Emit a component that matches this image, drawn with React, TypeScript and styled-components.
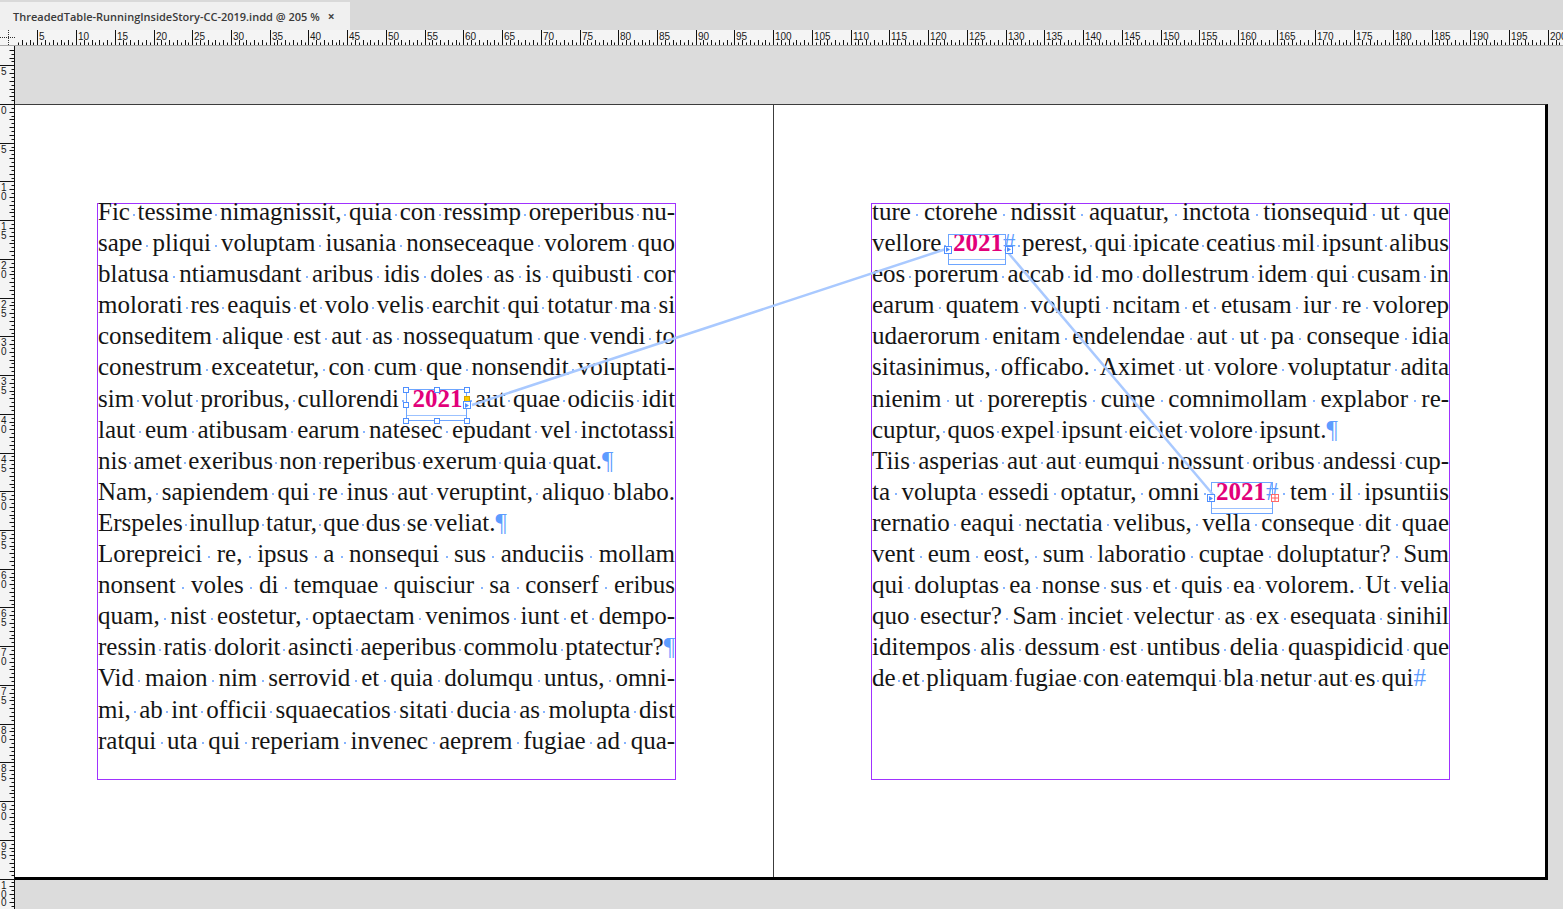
import React from "react";
import styled, { createGlobalStyle } from "styled-components";

const GlobalStyle = createGlobalStyle`
  html, body {
    margin: 0;
    padding: 0;
    background: #dcdcdc;
    overflow: hidden;
  }
  #root {
    width: 1563px;
    height: 909px;
  }
`;

const Window = styled.div`
  width: 1563px;
  height: 909px;
  display: flex;
  flex-direction: column;
  background: #dcdcdc;
  font-family: "Liberation Sans", Arial, sans-serif;
`;

const TabBar = styled.div`
  height: 30px;
  display: flex;
  align-items: flex-end;
  background: #d9d9d9;
`;

const Tab = styled.div`
  width: 350px;
  height: 28px;
  box-sizing: border-box;
  padding-left: 13px;
  display: flex;
  align-items: center;
  gap: 8px;
  background: #f0f0f0;
  font: 600 11px "Open Sans", "Liberation Sans", sans-serif;
  color: #3a3a3a;
`;

const Close = styled.span`
  font-size: 12px;
  font-weight: 700;
  color: #444;
`;

const RulerRow = styled.div`
  height: 16px;
  display: flex;
  background: #f4f4f4;
  border-bottom: 1px solid #a8a8a8;
  box-sizing: border-box;
`;

const Corner = styled.div`
  width: 15px;
  height: 15px;
  flex: none;
`;

const HRulerBox = styled.div`
  flex: 1;
  height: 15px;
  overflow: hidden;
`;

const Body = styled.div`
  flex: 1;
  display: flex;
  min-height: 0;
`;

const VRulerBox = styled.div`
  width: 15px;
  flex: none;
  background: #f4f4f4;
  overflow: hidden;
`;

const Pasteboard = styled.div`
  flex: 1;
  padding-top: 58px;
  overflow: hidden;
  background: #dcdcdc;
`;

const Spread = styled.div`
  position: relative;
  width: 1533px;
  height: 776px;
  box-sizing: border-box;
  display: flex;
  background: #fff;
  border-top: 1px solid #3c3c3c;
  border-right: 3px solid #000;
  border-bottom: 3px solid #000;
`;

const Page = styled.div<{ $width?: number; $left: number }>`
  ${({ $width }) => ($width ? `width: ${$width}px; flex: none;` : "flex: 1;")}
  box-sizing: border-box;
  padding: 98px 0 0 ${({ $left }) => $left}px;
`;

const Spine = styled.div`
  width: 1px;
  flex: none;
  background: #3c3c3c;
`;

const TextFrame = styled.div`
  width: 579px;
  height: 577px;
  box-sizing: border-box;
  border: 1px solid #a032ff;
  font-family: "Liberation Serif", "Times New Roman", serif;
  font-size: 25px;
  line-height: 31.1px;
  color: #151515;
`;

const Story = styled.div`
  margin-top: -8px;
`;

const Line = styled.div<{ $last?: boolean }>`
  white-space: nowrap;
  text-align: ${({ $last }) => ($last ? "left" : "justify")};
  text-align-last: ${({ $last }) => ($last ? "left" : "justify")};
`;

const Space = styled.span`
  position: relative;
  &::after {
    content: "";
    position: absolute;
    left: 50%;
    top: 15.5px;
    width: 2px;
    height: 2px;
    margin-left: -1px;
    background: #86b4ff;
  }
`;

const Mark = styled.span`
  color: #5d9cff;
  font-weight: 400;
`;

const FrameBox = styled.span<{ $cut: number }>`
  position: relative;
  padding: 0 ${({ $cut }) => ($cut > 0 ? 0 : 5)}px 0 ${({ $cut }) => ($cut > 0 ? 5 : 6)}px;
  color: #e2007a;
  font-weight: 700;
  &::before {
    content: "";
    position: absolute;
    left: 0;
    right: ${({ $cut }) => $cut}px;
    top: 4.5px;
    bottom: -9px;
    border: 1px solid #6ea6ff;
  }
  &::after {
    content: "";
    position: absolute;
    left: 1px;
    right: ${({ $cut }) => $cut + 1}px;
    bottom: -4px;
    height: 1px;
    background: #9cc2ff;
  }
`;

const Handle = styled.span<{ $h: "l" | "c" | "r"; $v: "t" | "m" | "b" }>`
  position: absolute;
  z-index: 3;
  width: 6px;
  height: 6px;
  box-sizing: border-box;
  background: #fff;
  border: 1px solid #4f8fff;
  transform: translate(-50%, -50%);
  left: ${({ $h }) => ($h === "l" ? "0" : $h === "c" ? "50%" : "100%")};
  top: ${({ $v }) => ($v === "t" ? "5px" : $v === "m" ? "20.6px" : "calc(100% + 9px)")};
`;

const AnchorMark = styled.span`
  position: absolute;
  z-index: 3;
  right: -3px;
  top: 11px;
  width: 6px;
  height: 6px;
  background: #ffcc00;
  border: 1px solid #d9a400;
  box-sizing: border-box;
`;

const Port = styled.span<{ $side: "left" | "right"; $kind: "in" | "out" | "over"; $cut?: number }>`
  position: absolute;
  z-index: 3;
  top: 20.6px;
  left: ${({ $side, $cut = 0 }) => ($side === "left" ? "0" : `calc(100% - ${$cut}px)`)};
  transform: translate(-50%, -50%);
  width: 8px;
  height: 8px;
  box-sizing: border-box;
  background: #fff;
  border: 1px solid ${({ $kind }) => ($kind === "over" ? "#ff6b6b" : "#4f8fff")};
  display: flex;
  align-items: center;
  justify-content: center;
  svg {
    display: block;
  }
`;

const Overlay = styled.svg`
  position: absolute;
  left: 0;
  top: 0;
  z-index: 2;
  pointer-events: none;
`;

const tri = (
  <svg width="4" height="5" viewBox="0 0 4 5">
    <path d="M0 0 L4 2.5 L0 5 Z" fill="#4f8fff" />
  </svg>
);

const plus = (
  <svg width="6" height="6" viewBox="0 0 6 6">
    <path d="M3 0 V6 M0 3 H6" stroke="#ff5a5a" strokeWidth="1" />
  </svg>
);

const Anchored = ({ kind }: { kind: "A" | "B" | "C" }) => {
  const cut = kind === "B" ? 9 : kind === "C" ? 5 : 0;
  return (
    <FrameBox $cut={cut}>
      2021
      {kind !== "A" && <Mark>#</Mark>}
      {kind === "A" && (
        <>
          <Handle $h="l" $v="t" />
          <Handle $h="c" $v="t" />
          <Handle $h="r" $v="t" />
          <Handle $h="l" $v="m" />
          <Handle $h="l" $v="b" />
          <Handle $h="c" $v="b" />
          <Handle $h="r" $v="b" />
          <AnchorMark />
          <Port $side="right" $kind="out">{tri}</Port>
        </>
      )}
      {kind === "B" && (
        <>
          <Port $side="left" $kind="in">{tri}</Port>
          <Port $side="right" $kind="out" $cut={cut - 3}>{tri}</Port>
        </>
      )}
      {kind === "C" && (
        <>
          <Port $side="left" $kind="in">{tri}</Port>
          <Port $side="right" $kind="over" $cut={cut - 2}>{plus}</Port>
        </>
      )}
    </FrameBox>
  );
};

const renderLine = (text: string) =>
  text.split(" ").map((t, i) => {
    const sp = i > 0 ? <Space> </Space> : null;
    const frame = t.match(/^\[([ABC])\]$/);
    if (frame) {
      return (
        <React.Fragment key={i}>
          {sp}
          <Anchored kind={frame[1] as "A" | "B" | "C"} />
        </React.Fragment>
      );
    }
    const end = t.match(/^(.*?)([¶#])$/);
    return (
      <React.Fragment key={i}>
        {sp}
        {end ? (
          <>
            {end[1]}
            <Mark>{end[2]}</Mark>
          </>
        ) : (
          t
        )}
      </React.Fragment>
    );
  });

const leftStory: [string, boolean?][] = [
  ["Fic tessime nimagnissit, quia con ressimp oreperibus nu-"],
  ["sape pliqui voluptam iusania nonseceaque volorem quo"],
  ["blatusa ntiamusdant aribus idis doles as is quibusti cor"],
  ["molorati res eaquis et volo velis earchit qui totatur ma si"],
  ["conseditem alique est aut as nossequatum que vendi to"],
  ["conestrum exceatetur, con cum que nonsendit voluptati-"],
  ["sim volut proribus, cullorendi [A] aut quae odiciis idit"],
  ["laut eum atibusam earum natesec epudant vel inctotassi"],
  ["nis amet exeribus non reperibus exerum quia quat.¶", true],
  ["Nam, sapiendem qui re inus aut veruptint, aliquo blabo."],
  ["Erspeles inullup tatur, que dus se veliat.¶", true],
  ["Lorepreici re, ipsus a nonsequi sus anduciis mollam"],
  ["nonsent voles di temquae quisciur sa conserf eribus"],
  ["quam, nist eostetur, optaectam venimos iunt et dempo-"],
  ["ressin ratis dolorit asincti aeperibus commolu ptatectur?¶"],
  ["Vid maion nim serrovid et quia dolumqu untus, omni-"],
  ["mi, ab int officii squaecatios sitati ducia as molupta dist"],
  ["ratqui uta qui reperiam invenec aeprem fugiae ad qua-"],
];

const rightStory: [string, boolean?][] = [
  ["ture ctorehe ndissit aquatur, inctota tionsequid ut que"],
  ["vellore [B] perest, qui ipicate ceatius mil ipsunt alibus"],
  ["eos porerum accab id mo dollestrum idem qui cusam in"],
  ["earum quatem volupti ncitam et etusam iur re volorep"],
  ["udaerorum enitam endelendae aut ut pa conseque idia"],
  ["sitasinimus, officabo. Aximet ut volore voluptatur adita"],
  ["nienim ut porereptis cume comnimollam explabor re-"],
  ["cuptur, quos expel ipsunt eiciet volore ipsunt.¶", true],
  ["Tiis asperias aut aut eumqui nossunt oribus andessi cup-"],
  ["ta volupta essedi optatur, omni [C] tem il ipsuntiis"],
  ["rernatio eaqui nectatia velibus, vella conseque dit quae"],
  ["vent eum eost, sum laboratio cuptae doluptatur? Sum"],
  ["qui doluptas ea nonse sus et quis ea volorem. Ut velia"],
  ["quo esectur? Sam inciet velectur as ex esequata sinihil"],
  ["iditempos alis dessum est untibus delia quaspidicid que"],
  ["de et pliquam fugiae con eatemqui bla netur aut es qui#", true],
];

const MM = 7.746;

const HRuler = () => {
  const w = 1548;
  const ticks: React.ReactNode[] = [];
  for (let h = 0; h <= 404; h++) {
    const u = h / 2;
    const x = -16.4 + u * MM;
    if (x < 0 || x > w) continue;
    const xx = Math.round(x) + 0.5;
    if (h % 10 === 0) {
      ticks.push(<line key={h} x1={xx} y1={0} x2={xx} y2={15} stroke="#111" />);
      ticks.push(
        <text key={`t${h}`} x={xx + 1.5} y={9.5} fontSize="10" fill="#1a1a1a" fontFamily="'Liberation Sans', Arial, sans-serif">
          {u}
        </text>
      );
    } else if (h % 2 === 0) {
      ticks.push(<line key={h} x1={xx} y1={10} x2={xx} y2={15} stroke="#111" />);
    } else {
      ticks.push(<line key={h} x1={xx} y1={12.5} x2={xx} y2={15} stroke="#111" />);
    }
  }
  return (
    <svg width={w} height={15}>
      {ticks}
    </svg>
  );
};

const VRuler = () => {
  const hgt = 863;
  const ticks: React.ReactNode[] = [];
  for (let h = -16; h <= 210; h++) {
    const u = h / 2;
    const y = 58 + u * MM;
    if (y < 0 || y > hgt) continue;
    const yy = Math.round(y) + 0.5;
    if (h % 10 === 0) {
      ticks.push(<line key={h} x1={0} y1={yy} x2={14} y2={yy} stroke="#111" />);
      String(Math.abs(u))
        .split("")
        .forEach((d, i) =>
          ticks.push(
            <text key={`t${h}-${i}`} x={1} y={yy + 9.5 + i * 8.5} fontSize="10" fill="#1a1a1a" fontFamily="'Liberation Sans', Arial, sans-serif">
              {d}
            </text>
          )
        );
    } else if (h % 2 === 0) {
      ticks.push(<line key={h} x1={9.5} y1={yy} x2={14} y2={yy} stroke="#111" />);
    } else {
      ticks.push(<line key={h} x1={11.5} y1={yy} x2={14} y2={yy} stroke="#111" />);
    }
  }
  return (
    <svg width={15} height={hgt}>
      {ticks}
      <line x1={14.5} y1={0} x2={14.5} y2={hgt} stroke="#111" />
    </svg>
  );
};

const CornerMark = () => (
  <svg width={15} height={15}>
    <line x1={0} y1={7.5} x2={15} y2={7.5} stroke="#333" strokeDasharray="1 1" />
    <line x1={8.5} y1={0} x2={8.5} y2={15} stroke="#333" strokeDasharray="1 1" />
  </svg>
);

export default function App() {
  return (
    <>
      <GlobalStyle />
      <Window>
        <TabBar>
          <Tab>
            <span>ThreadedTable-RunningInsideStory-CC-2019.indd @ 205 %</span>
            <Close>×</Close>
          </Tab>
        </TabBar>
        <RulerRow>
          <Corner>
            <CornerMark />
          </Corner>
          <HRulerBox>
            <HRuler />
          </HRulerBox>
        </RulerRow>
        <Body>
          <VRulerBox>
            <VRuler />
          </VRulerBox>
          <Pasteboard>
            <Spread>
              <Page $width={758} $left={82}>
                <TextFrame>
                  <Story>
                    {leftStory.map(([t, last], i) => (
                      <Line key={i} $last={last}>
                        {renderLine(t)}
                      </Line>
                    ))}
                  </Story>
                </TextFrame>
              </Page>
              <Spine />
              <Page $left={97}>
                <TextFrame>
                  <Story>
                    {rightStory.map(([t, last], i) => (
                      <Line key={i} $last={last}>
                        {renderLine(t)}
                      </Line>
                    ))}
                  </Story>
                </TextFrame>
              </Page>
              <Overlay width={1530} height={772}>
                <line x1={457} y1={300} x2={931} y2={144} stroke="#a9c9ff" strokeWidth={2.5} />
                <line x1={990} y1={144} x2={1200} y2={392} stroke="#a9c9ff" strokeWidth={2.5} />
              </Overlay>
            </Spread>
          </Pasteboard>
        </Body>
      </Window>
    </>
  );
}
